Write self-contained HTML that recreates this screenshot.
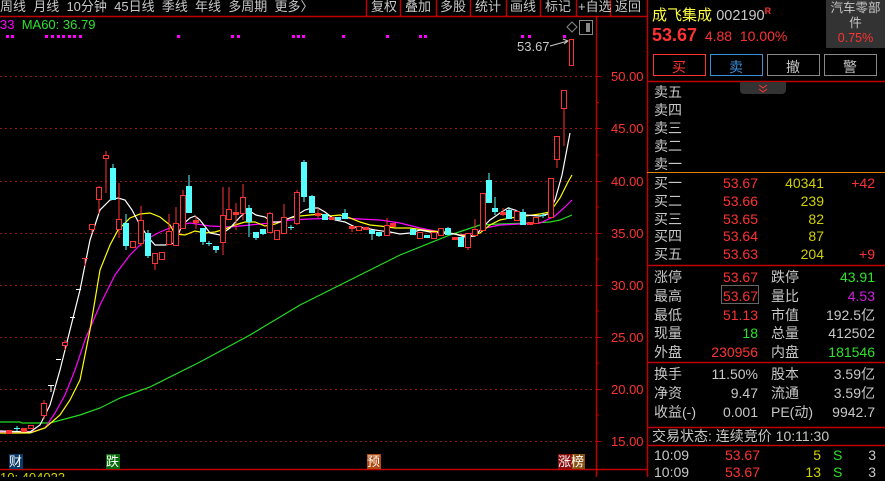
<!DOCTYPE html>
<html><head><meta charset="utf-8"><style>
*{margin:0;padding:0;box-sizing:border-box}
body{width:885px;height:477px;background:#000;overflow:hidden;position:relative;font-family:"Liberation Sans","Noto Sans CJK SC",sans-serif;color:#c8c8c8}
.a{position:absolute;white-space:nowrap}
.r{color:#ff3232}.g{color:#2fe02f}.y{color:#d0d000}.w{color:#c8c8c8}
.rt{text-align:right}
.p{font-size:14px;line-height:16px}
.hb{position:absolute;top:-1px;font-size:13px;line-height:16px;white-space:nowrap}
</style></head><body>
<svg class="a" style="left:0;top:0" width="885" height="477">
<g stroke="#c00000" stroke-width="1.5" fill="none">
<path d="M0 16.5H647M596.5 16V477M647.5 0V477M0 469.5H647M366.5 0V16M400.5 0V16M436.5 0V16M470.5 0V16M506.5 0V16M540.5 0V16M576.5 0V16M610.5 0V16M647 81.5H885M647 265.5H885M647 362.5H885M647 427.5H885M647 445.5H885"/>
</g>
<path d="M647 172.5H885" stroke="#e08000" stroke-width="1"/>
<g stroke="#8a1a1a" stroke-dasharray="2,3" stroke-width="1">
<path d="M0 76.5H596M0 128.5H596M0 181.5H596M0 233.5H596M0 285.5H596M0 337.5H596M0 389.5H596M0 441.5H596"/>
</g>
<g stroke="#c00000"><path d="M596 76.5h5M596 102.5h3M596 128.5h5M596 155h3M596 181.5h5M596 207h3M596 233.5h5M596 259h3M596 285.5h5M596 311h3M596 337.5h5M596 363h3M596 389.5h5M596 415h3M596 441.5h5"/></g>
<g fill="#ff3232" font-size="13" font-family="Liberation Sans">
<text x="611" y="81">50.00</text><text x="611" y="133">45.00</text><text x="611" y="186">40.00</text><text x="611" y="238">35.00</text><text x="611" y="290">30.00</text><text x="611" y="342">25.00</text><text x="611" y="394">20.00</text><text x="611" y="446">15.00</text>
</g>
<g fill="#ff00ff"><rect x="6" y="35" width="3" height="3"/><rect x="11" y="35" width="3" height="3"/><rect x="45" y="35" width="3" height="3"/><rect x="51" y="35" width="3" height="3"/><rect x="57" y="35" width="3" height="3"/><rect x="62" y="35" width="3" height="3"/><rect x="68" y="35" width="3" height="3"/><rect x="73" y="35" width="3" height="3"/><rect x="79" y="35" width="3" height="3"/><rect x="177" y="35" width="3" height="3"/><rect x="231" y="35" width="3" height="3"/><rect x="237" y="35" width="3" height="3"/><rect x="292" y="35" width="3" height="3"/><rect x="297" y="35" width="3" height="3"/><rect x="302" y="35" width="3" height="3"/><rect x="342" y="35" width="3" height="3"/><rect x="386" y="35" width="3" height="3"/><rect x="419" y="35" width="3" height="3"/><rect x="424" y="35" width="3" height="3"/><rect x="521" y="35" width="3" height="3"/><rect x="528" y="35" width="3" height="3"/><rect x="563" y="35" width="3" height="3"/></g>
<path d="M567 27l5-5 5 5-5 5z" fill="none" stroke="#888"/>
<rect x="579.5" y="20.5" width="13" height="14" fill="none" stroke="#888"/><rect x="586" y="23" width="4" height="9" fill="#888"/>
<text x="517" y="51" fill="#c8c8c8" font-size="13">53.67</text>
<path d="M550 46L568 41" stroke="#ccc"/><path d="M563 39l5 2-4 3" stroke="#ccc" fill="none"/>
<g fill="none" stroke-width="1.2">
<polyline stroke="#22dd22" points="0,422 20,422 22,423 50,423 65,419 80,415 100,408 120,398 150,387 200,362 250,335 300,305 350,280 400,255 450,235 480,225 500,224 530,223 550,222 560,220 572,215"/>
<polyline stroke="#ff00ff" points="0,432 25,432 35,431 45,428 55,413 65,395 75,370 85,340 100,305 115,275 130,255 145,240 160,232 175,226 190,223 210,226 230,227 250,225 270,223 290,220 310,219 340,218 360,219 380,220 400,223 420,228 440,232 460,235 475,233 485,228 500,225 520,224 540,223 555,216 565,207 572,200"/>
<polyline stroke="#ffff00" points="0,433 30,433 45,428 60,415 70,400 80,380 90,330 100,270 110,245 118,230 130,218 140,214 150,213 160,217 170,225 175,234 185,235 195,231 205,233 215,232 225,229 235,225 245,222 255,222 265,226 275,224 290,218 300,216 320,214 330,216 340,215 350,218 360,222 370,225 380,226 395,228 410,228 430,231 445,232 460,235 470,236 480,233 490,225 500,220 510,218 525,216 540,214 550,212 560,198 568,182 572,175"/>
<polyline stroke="#ffffff" points="0,431 30,432 40,425 50,405 60,370 70,330 80,290 90,240 100,210 110,200 118,198 125,200 132,210 140,225 148,237 155,245 165,245 175,243 182,225 190,218 195,216 200,220 210,233 220,235 230,228 240,217 248,210 256,215 265,217 272,222 280,222 297,215 305,210 312,208 318,208 325,212 335,220 345,222 355,227 365,228 375,230 390,232 400,234 410,233 420,230 430,232 440,233 455,234 465,237 475,236 482,228 490,220 500,213 508,208 515,210 525,215 540,216 548,214 555,200 562,175 570,133"/>
</g>
<path d="M48 385.5h6M51 385V392M56 359.5h5M70 317.5h5M76 289.5h5" stroke="#fff"/>
<g stroke="#ff3232" fill="#000">
<path d="M44 400V419M65 340V350M92 224V233M99 186V214M106 151V193M119 183V238M141 206V246M155 253V270M169 214V244M176 207V245M183 190V228M196 216V229M223 187V255M229 187V219M236 203V230M243 184V220M270 212V232M277 230V239M284 204V233M297 190V225M318 208V218M352 226V232M387 218V235M468 233V250M475 219V235M483 193V230M503 208V216M557 136V168M564 90V146M85 258V266M82 258.5h6"/>
<rect x="6.5" y="430.5" width="5" height="3" fill="#ff3232"/><rect x="21.5" y="428.5" width="5" height="3" fill="#ff3232"/><rect x="28.5" y="425.5" width="5" height="3"/>
<rect x="41.5" y="403.5" width="5" height="12"/><rect x="62.5" y="342.5" width="5" height="3"/><rect x="89.5" y="224.5" width="5" height="5"/>
<rect x="96.5" y="187.5" width="5" height="12"/><rect x="103.5" y="155.5" width="5" height="3"/><rect x="116.5" y="219.5" width="5" height="10"/>
<rect x="130.5" y="241.5" width="5" height="6"/><rect x="138.5" y="220.5" width="5" height="23"/><rect x="152.5" y="253.5" width="5" height="10"/>
<rect x="159.5" y="252.5" width="5" height="7"/><rect x="166.5" y="231.5" width="5" height="13"/><rect x="173.5" y="223.5" width="5" height="22"/>
<rect x="180.5" y="195.5" width="5" height="33"/><rect x="193.5" y="220.5" width="5" height="2" fill="#ff3232"/><rect x="220.5" y="215.5" width="5" height="27"/>
<rect x="226.5" y="209.5" width="5" height="10"/><rect x="233.5" y="212.5" width="5" height="2" fill="#ff3232"/><rect x="240.5" y="197.5" width="5" height="16"/>
<rect x="267.5" y="213.5" width="5" height="19"/><rect x="274.5" y="230.5" width="5" height="9"/><rect x="281.5" y="217.5" width="5" height="16"/>
<rect x="294.5" y="192.5" width="5" height="31"/><rect x="315.5" y="213.5" width="5" height="2" fill="#ff3232"/><rect x="329.5" y="217.5" width="5" height="2" fill="#ff3232"/>
<rect x="349.5" y="226.5" width="5" height="2" fill="#ff3232"/><rect x="356.5" y="226.5" width="5" height="4"/><rect x="363.5" y="227.5" width="5" height="2" fill="#ff3232"/>
<rect x="384.5" y="225.5" width="5" height="10"/><rect x="390.5" y="223.5" width="5" height="3" fill="#ff3232"/><rect x="417.5" y="232.5" width="5" height="6"/>
<rect x="431.5" y="232.5" width="5" height="6"/><rect x="438.5" y="228.5" width="5" height="7"/><rect x="452.5" y="237.5" width="5" height="2" fill="#ff3232"/>
<rect x="465.5" y="233.5" width="5" height="14"/><rect x="472.5" y="229.5" width="5" height="6"/><rect x="480.5" y="193.5" width="5" height="37"/>
<rect x="500.5" y="212.5" width="5" height="2" fill="#ff3232"/><rect x="514.5" y="211.5" width="5" height="9"/><rect x="527.5" y="222.5" width="5" height="2" fill="#ff3232"/>
<rect x="533.5" y="217.5" width="5" height="6"/><rect x="548.5" y="178.5" width="5" height="39"/><rect x="554.5" y="136.5" width="5" height="23"/>
<rect x="561.5" y="90.5" width="5" height="18"/><rect x="569.5" y="39.5" width="4" height="26"/>
</g>
<g stroke="#54ffff" fill="#54ffff">
<path d="M113 164V200M126 214V250M148 230V258M189 175V213M203 228V245M216 246V253M249 205V237M256 232V240M263 229V235M304 160V202M312 195V213M345 209V218M372 230V240M379 232V237M448 227V234M489 173V202M495 197V215M509 207V218M523 209V224M14 428.5h6M17 426V431M206 243.5h6M209 241V246M288 227.5h6M291 225V230M540 215.5h6M543 213V218"/>
<rect x="110.5" y="168.5" width="5" height="31"/><rect x="123.5" y="223.5" width="5" height="22"/><rect x="145.5" y="233.5" width="5" height="22"/>
<rect x="186.5" y="186.5" width="5" height="26"/><rect x="200.5" y="228.5" width="5" height="13"/><rect x="213.5" y="246.5" width="5" height="3"/>
<rect x="246.5" y="208.5" width="5" height="13"/><rect x="253.5" y="232.5" width="5" height="5"/><rect x="260.5" y="229.5" width="5" height="4"/>
<rect x="301.5" y="162.5" width="5" height="34"/><rect x="309.5" y="196.5" width="5" height="16"/><rect x="322.5" y="214.5" width="5" height="5"/>
<rect x="335.5" y="217.5" width="5" height="2"/><rect x="342.5" y="213.5" width="5" height="5"/><rect x="369.5" y="230.5" width="5" height="3"/>
<rect x="376.5" y="232.5" width="5" height="3"/><rect x="410.5" y="229.5" width="5" height="5"/><rect x="424.5" y="235.5" width="5" height="2"/>
<rect x="445.5" y="228.5" width="5" height="6"/><rect x="458.5" y="237.5" width="5" height="9"/><rect x="486.5" y="180.5" width="5" height="22"/>
<rect x="492.5" y="208.5" width="5" height="3"/><rect x="506.5" y="210.5" width="5" height="8"/><rect x="520.5" y="212.5" width="5" height="12"/>
</g>
<rect x="9" y="454" width="14" height="15" fill="#0a3a6a"/><rect x="106" y="454" width="14" height="15" fill="#0a6a0a"/><rect x="367" y="454" width="14" height="15" fill="#b04a10"/><rect x="558" y="454" width="14" height="15" fill="#8a1010"/><rect x="572" y="454" width="13" height="15" fill="#8a5010"/>
<g fill="#fff" font-size="13" font-family="Liberation Sans,Noto Sans CJK SC,sans-serif"><text x="9" y="466">财</text><text x="106" y="466">跌</text><text x="367" y="466">预</text><text x="558" y="466">涨榜</text></g>
<text x="0" y="482" fill="#d0d000" font-size="13">10: 404023</text>
<rect x="826" y="0" width="59" height="48" fill="#333"/>
<rect x="653.5" y="54.5" width="52" height="21" fill="none" stroke="#ff3232"/>
<rect x="710.5" y="54.5" width="52" height="21" fill="none" stroke="#3a8fd8"/>
<rect x="767.5" y="54.5" width="52" height="21" fill="none" stroke="#888"/>
<rect x="824.5" y="54.5" width="52" height="21" fill="none" stroke="#888"/>
<path d="M740 82h46v8a4 4 0 0 1-4 4h-38a4 4 0 0 1-4-4z" fill="#333"/>
<path d="M759 85l4 3 4-3M759 89l4 3 4-3" stroke="#ff3232" fill="none"/>
<rect x="721.5" y="285.5" width="37" height="18" fill="none" stroke="#666"/>
</svg>

<div class="a" style="left:0;top:-1px;font-size:13px;line-height:16px;color:#c8c8c8">周线&nbsp; 月线&nbsp; 10分钟&nbsp; 45日线&nbsp; 季线&nbsp; 年线&nbsp; 多周期&nbsp; 更多〉</div>
<div class="hb" style="left:371px">复权</div>
<div class="hb" style="left:405px">叠加</div>
<div class="hb" style="left:440px">多股</div>
<div class="hb" style="left:475px">统计</div>
<div class="hb" style="left:510px">画线</div>
<div class="hb" style="left:545px">标记</div>
<div class="hb" style="left:578px">+自选</div>
<div class="hb" style="left:615px">返回</div>
<div class="a" style="left:0;top:17px;font-size:13px;line-height:16px"><span style="color:#ff00ff">33</span>&nbsp; <span class="g">MA60: 36.79</span></div>

<div class="a" style="left:652px;top:2px;font-size:15px;line-height:18px"><span style="color:#ffff40">成飞集成</span> <span class="w" style="font-size:14.5px">002190</span><sup class="r" style="font-size:9px;font-weight:bold">R</sup></div>
<div class="a" style="left:826px;top:1px;width:59px;text-align:center;font-size:12.5px;line-height:15px;color:#c8c8c8">汽车零部<br>件<br><span class="r">0.75%</span></div>
<div class="a r" style="left:652px;top:25px;font-size:14px;line-height:20px"><b style="font-size:18px">53.67</b>&nbsp; 4.88&nbsp; 10.00%</div>
<div class="a r" style="left:672px;top:57px;font-size:14px">买</div>
<div class="a" style="left:729px;top:57px;font-size:14px;color:#3a8fd8">卖</div>
<div class="a" style="left:786px;top:57px;font-size:14px">撤</div>
<div class="a" style="left:843px;top:57px;font-size:14px">警</div>
<div class="a p" style="left:654px;top:83px;line-height:18px">卖五<br>卖四<br>卖三<br>卖二<br>卖一</div>

<div class="a p" style="left:654px;top:175px;line-height:17.8px">买一<br>买二<br>买三<br>买四<br>买五</div>
<div class="a p r rt" style="left:700px;top:175px;width:58px;line-height:17.8px">53.67<br>53.66<br>53.65<br>53.64<br>53.63</div>
<div class="a p y rt" style="left:760px;top:175px;width:64px;line-height:17.8px">40341<br>239<br>82<br>87<br>204</div>
<div class="a p r rt" style="left:830px;top:175px;width:45px;line-height:17.8px">+42<br><br><br><br>+9</div>

<div class="a p" style="left:654px;top:268px;line-height:18.8px">涨停<br>最高<br>最低<br>现量<br>外盘</div>
<div class="a p rt" style="left:680px;top:268px;width:78px;line-height:18.8px"><span class="r">53.67</span><br><span class="r">53.67</span><br><span class="r">51.13</span><br><span class="g">18</span><br><span class="r">230956</span></div>
<div class="a p" style="left:771px;top:268px;line-height:18.8px">跌停<br>量比<br>市值<br>总量<br>内盘</div>
<div class="a p rt" style="left:800px;top:268px;width:75px;line-height:18.8px"><span class="g">43.91</span><br><span style="color:#d020e0">4.53</span><br>192.5亿<br>412502<br><span class="g">181546</span></div>

<div class="a p" style="left:654px;top:365px;line-height:19px">换手<br>净资<br>收益(-)</div>
<div class="a p rt" style="left:690px;top:365px;width:68px;line-height:19px">11.50%<br>9.47<br>0.001</div>
<div class="a p" style="left:771px;top:365px;line-height:19px">股本<br>流通<br>PE(动)</div>
<div class="a p rt" style="left:800px;top:365px;width:75px;line-height:19px">3.59亿<br>3.59亿<br>9942.7</div>

<div class="a p" style="left:652px;top:428px">交易状态: 连续竞价 10:11:30</div>
<div class="a p" style="left:654px;top:447px;line-height:17px">10:09<br>10:09</div>
<div class="a p r rt" style="left:700px;top:447px;width:60px;line-height:17px">53.67<br>53.67</div>
<div class="a p y rt" style="left:780px;top:447px;width:41px;line-height:17px">5<br>13</div>
<div class="a p g" style="left:833px;top:447px;line-height:17px">S<br>S</div>
<div class="a p rt" style="left:850px;top:447px;width:26px;line-height:17px">3<br>3</div>
</body></html>
